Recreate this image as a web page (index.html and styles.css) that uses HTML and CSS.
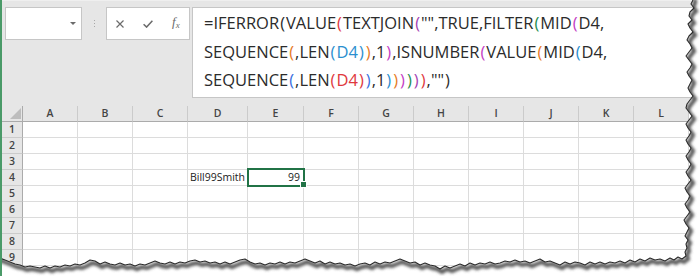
FILE: index.html
```html
<!DOCTYPE html>
<html>
<head>
<meta charset="utf-8">
<link rel="stylesheet" href="styles.css">
</head>
<body>
<div class="app">
  <div class="toolbar">
    <div class="namebox"><span class="dd"></span></div>
    <div class="sep"><i></i><i></i><i></i></div>
    <div class="btns">
      <svg class="ico-x" width="8" height="8" viewBox="0 0 8 8"><path d="M0.5 0.5L7.5 7.5M7.5 0.5L0.5 7.5" stroke="#6b6b6b" stroke-width="1.2" fill="none"/></svg>
      <svg class="ico-ok" width="10" height="8" viewBox="0 0 10 8"><path d="M0.6 4.2L3.6 7.1L9.4 0.8" stroke="#6b6b6b" stroke-width="1.5" fill="none"/></svg>
      <span class="fx"><i>f</i><sub>x</sub></span>
    </div>
    <div class="formula">
      <div class="fl">=IFERROR<span class="b p1">(</span>VALUE<span class="b p2">(</span>TEXTJOIN<span class="b p3">(</span>"",TRUE,FILTER<span class="b p4">(</span>MID<span class="b p5">(</span>D4,</div>
      <div class="fl">SEQUENCE<span class="b p6">(</span>,LEN<span class="b p7">(</span><span class="p7">D4</span><span class="b p7">)</span><span class="b p6">)</span>,1<span class="b p5">)</span>,ISNUMBER<span class="b p5">(</span>VALUE<span class="b p6">(</span>MID<span class="b p7">(</span>D4,</div>
      <div class="fl">SEQUENCE<span class="b p8">(</span>,LEN<span class="b p9">(</span><span class="p9">D4</span><span class="b p9">)</span><span class="b p8">)</span>,1<span class="b p7">)</span><span class="b p6">)</span><span class="b p5">)</span><span class="b p4">)</span><span class="b p3">)</span><span class="b p2">)</span>,""<span class="b p1">)</span></div>
    </div>
  </div>
  <div class="sheet">
    <div class="h corner"><svg width="11" height="11" viewBox="0 0 11 11"><path d="M11 0V11H0Z" fill="#bdbdbd"/></svg></div>
    <div class="h">A</div><div class="h">B</div><div class="h">C</div><div class="h">D</div><div class="h">E</div><div class="h">F</div><div class="h">G</div><div class="h">H</div><div class="h">I</div><div class="h">J</div><div class="h">K</div><div class="h">L</div>

    <div class="r">1</div><div class="c"></div><div class="c"></div><div class="c"></div><div class="c"></div><div class="c"></div><div class="c"></div><div class="c"></div><div class="c"></div><div class="c"></div><div class="c"></div><div class="c"></div><div class="c"></div>
    <div class="r">2</div><div class="c"></div><div class="c"></div><div class="c"></div><div class="c"></div><div class="c"></div><div class="c"></div><div class="c"></div><div class="c"></div><div class="c"></div><div class="c"></div><div class="c"></div><div class="c"></div>
    <div class="r">3</div><div class="c"></div><div class="c"></div><div class="c"></div><div class="c"></div><div class="c"></div><div class="c"></div><div class="c"></div><div class="c"></div><div class="c"></div><div class="c"></div><div class="c"></div><div class="c"></div>
    <div class="r">4</div><div class="c"></div><div class="c"></div><div class="c"></div><div class="c txt">Bill99Smith</div><div class="c num sel">99</div><div class="c"></div><div class="c"></div><div class="c"></div><div class="c"></div><div class="c"></div><div class="c"></div><div class="c"></div>
    <div class="r">5</div><div class="c"></div><div class="c"></div><div class="c"></div><div class="c"></div><div class="c"></div><div class="c"></div><div class="c"></div><div class="c"></div><div class="c"></div><div class="c"></div><div class="c"></div><div class="c"></div>
    <div class="r">6</div><div class="c"></div><div class="c"></div><div class="c"></div><div class="c"></div><div class="c"></div><div class="c"></div><div class="c"></div><div class="c"></div><div class="c"></div><div class="c"></div><div class="c"></div><div class="c"></div>
    <div class="r">7</div><div class="c"></div><div class="c"></div><div class="c"></div><div class="c"></div><div class="c"></div><div class="c"></div><div class="c"></div><div class="c"></div><div class="c"></div><div class="c"></div><div class="c"></div><div class="c"></div>
    <div class="r">8</div><div class="c"></div><div class="c"></div><div class="c"></div><div class="c"></div><div class="c"></div><div class="c"></div><div class="c"></div><div class="c"></div><div class="c"></div><div class="c"></div><div class="c"></div><div class="c"></div>
    <div class="r">9</div><div class="c"></div><div class="c"></div><div class="c"></div><div class="c"></div><div class="c"></div><div class="c"></div><div class="c"></div><div class="c"></div><div class="c"></div><div class="c"></div><div class="c"></div><div class="c"></div>
  </div>

  <svg class="tear" width="704" height="280" viewBox="0 0 704 280">
    <defs>
      <filter id="blur" x="-10%" y="-10%" width="120%" height="120%"><feGaussianBlur stdDeviation="1.6"/></filter>
      <clipPath id="outside">
        <path clip-rule="evenodd" d="M-10 -10H714V290H-10Z M0 0L693 0L691 4L694 8L690 12L689 16L692 20L688 24L690 28L693 32L689 36L687 40L690 44L692 48L689 52L686 56L689 60L692 64L690 68L687 72L689 76L692 80L690 84L688 88L690 92L693 96L690 100L687 104L686 108L689 112L692 116L689 120L686 124L688 128L691 132L689 136L686 140L688 144L691 148L689 152L686 156L688 160L691 164L689 168L686 172L688 176L691 180L688 184L685 188L687 192L690 196L688 200L685 204L687 208L690 212L687 216L684 220L686 224L689 228L687 232L685 236L688 240L686 244L687 248L685 252L686 256L682 259L678 257L674 260L670 258L665 261L660 259L655 260L650 258L645 261L640 259L635 262L630 260L625 263L620 261L615 263L610 262L605 264L600 262L595 264L590 262L585 265L580 263L575 262L570 264L565 262L560 265L555 263L550 261L545 262L540 259L535 261L530 263L525 261L520 262L515 260L510 262L505 261L500 263L495 264L490 262L485 264L480 263L475 265L470 263L465 266L460 264L455 266L450 268L445 266L440 269L435 266L430 265L425 263L420 265L415 262L410 263L405 261L400 259L395 261L390 263L385 262L380 264L375 262L370 265L365 263L360 264L355 266L350 264L345 265L340 263L335 264L330 262L325 264L320 261L315 263L310 261L305 259L300 261L295 263L290 262L285 264L280 262L275 264L270 263L265 265L260 263L255 264L250 262L245 259L240 260L235 262L230 264L225 262L220 264L215 262L210 263L205 261L200 262L195 260L190 261L185 263L180 262L175 264L170 262L165 264L160 263L155 261L150 263L145 265L140 264L135 266L130 264L125 265L120 263L115 265L110 264L105 262L100 264L95 261L90 260L85 263L80 265L75 264L70 266L65 265L60 267L55 266L50 268L45 266L40 268L35 267L30 266L25 267L20 265L15 264L10 262L5 260L0 258Z"/>
      </clipPath>
    </defs>
    <path fill="#ffffff" fill-rule="evenodd" d="M-10 -10H714V290H-10Z M0 0L693 0L691 4L694 8L690 12L689 16L692 20L688 24L690 28L693 32L689 36L687 40L690 44L692 48L689 52L686 56L689 60L692 64L690 68L687 72L689 76L692 80L690 84L688 88L690 92L693 96L690 100L687 104L686 108L689 112L692 116L689 120L686 124L688 128L691 132L689 136L686 140L688 144L691 148L689 152L686 156L688 160L691 164L689 168L686 172L688 176L691 180L688 184L685 188L687 192L690 196L688 200L685 204L687 208L690 212L687 216L684 220L686 224L689 228L687 232L685 236L688 240L686 244L687 248L685 252L686 256L682 259L678 257L674 260L670 258L665 261L660 259L655 260L650 258L645 261L640 259L635 262L630 260L625 263L620 261L615 263L610 262L605 264L600 262L595 264L590 262L585 265L580 263L575 262L570 264L565 262L560 265L555 263L550 261L545 262L540 259L535 261L530 263L525 261L520 262L515 260L510 262L505 261L500 263L495 264L490 262L485 264L480 263L475 265L470 263L465 266L460 264L455 266L450 268L445 266L440 269L435 266L430 265L425 263L420 265L415 262L410 263L405 261L400 259L395 261L390 263L385 262L380 264L375 262L370 265L365 263L360 264L355 266L350 264L345 265L340 263L335 264L330 262L325 264L320 261L315 263L310 261L305 259L300 261L295 263L290 262L285 264L280 262L275 264L270 263L265 265L260 263L255 264L250 262L245 259L240 260L235 262L230 264L225 262L220 264L215 262L210 263L205 261L200 262L195 260L190 261L185 263L180 262L175 264L170 262L165 264L160 263L155 261L150 263L145 265L140 264L135 266L130 264L125 265L120 263L115 265L110 264L105 262L100 264L95 261L90 260L85 263L80 265L75 264L70 266L65 265L60 267L55 266L50 268L45 266L40 268L35 267L30 266L25 267L20 265L15 264L10 262L5 260L0 258Z"/>
    <g clip-path="url(#outside)">
      <path class="shadow" transform="translate(2 3)" fill="none" stroke="#555" stroke-width="4" filter="url(#blur)" d="M693 -4L693 0L691 4L694 8L690 12L689 16L692 20L688 24L690 28L693 32L689 36L687 40L690 44L692 48L689 52L686 56L689 60L692 64L690 68L687 72L689 76L692 80L690 84L688 88L690 92L693 96L690 100L687 104L686 108L689 112L692 116L689 120L686 124L688 128L691 132L689 136L686 140L688 144L691 148L689 152L686 156L688 160L691 164L689 168L686 172L688 176L691 180L688 184L685 188L687 192L690 196L688 200L685 204L687 208L690 212L687 216L684 220L686 224L689 228L687 232L685 236L688 240L686 244L687 248L685 252L686 256L682 259L678 257L674 260L670 258L665 261L660 259L655 260L650 258L645 261L640 259L635 262L630 260L625 263L620 261L615 263L610 262L605 264L600 262L595 264L590 262L585 265L580 263L575 262L570 264L565 262L560 265L555 263L550 261L545 262L540 259L535 261L530 263L525 261L520 262L515 260L510 262L505 261L500 263L495 264L490 262L485 264L480 263L475 265L470 263L465 266L460 264L455 266L450 268L445 266L440 269L435 266L430 265L425 263L420 265L415 262L410 263L405 261L400 259L395 261L390 263L385 262L380 264L375 262L370 265L365 263L360 264L355 266L350 264L345 265L340 263L335 264L330 262L325 264L320 261L315 263L310 261L305 259L300 261L295 263L290 262L285 264L280 262L275 264L270 263L265 265L260 263L255 264L250 262L245 259L240 260L235 262L230 264L225 262L220 264L215 262L210 263L205 261L200 262L195 260L190 261L185 263L180 262L175 264L170 262L165 264L160 263L155 261L150 263L145 265L140 264L135 266L130 264L125 265L120 263L115 265L110 264L105 262L100 264L95 261L90 260L85 263L80 265L75 264L70 266L65 265L60 267L55 266L50 268L45 266L40 268L35 267L30 266L25 267L20 265L15 264L10 262L5 260L0 258L-4 258"/>
    </g>
    <path fill="none" stroke="#2a2a2a" stroke-width="1.1" stroke-linejoin="round" d="M693 0L691 4L694 8L690 12L689 16L692 20L688 24L690 28L693 32L689 36L687 40L690 44L692 48L689 52L686 56L689 60L692 64L690 68L687 72L689 76L692 80L690 84L688 88L690 92L693 96L690 100L687 104L686 108L689 112L692 116L689 120L686 124L688 128L691 132L689 136L686 140L688 144L691 148L689 152L686 156L688 160L691 164L689 168L686 172L688 176L691 180L688 184L685 188L687 192L690 196L688 200L685 204L687 208L690 212L687 216L684 220L686 224L689 228L687 232L685 236L688 240L686 244L687 248L685 252L686 256L682 259L678 257L674 260L670 258L665 261L660 259L655 260L650 258L645 261L640 259L635 262L630 260L625 263L620 261L615 263L610 262L605 264L600 262L595 264L590 262L585 265L580 263L575 262L570 264L565 262L560 265L555 263L550 261L545 262L540 259L535 261L530 263L525 261L520 262L515 260L510 262L505 261L500 263L495 264L490 262L485 264L480 263L475 265L470 263L465 266L460 264L455 266L450 268L445 266L440 269L435 266L430 265L425 263L420 265L415 262L410 263L405 261L400 259L395 261L390 263L385 262L380 264L375 262L370 265L365 263L360 264L355 266L350 264L345 265L340 263L335 264L330 262L325 264L320 261L315 263L310 261L305 259L300 261L295 263L290 262L285 264L280 262L275 264L270 263L265 265L260 263L255 264L250 262L245 259L240 260L235 262L230 264L225 262L220 264L215 262L210 263L205 261L200 262L195 260L190 261L185 263L180 262L175 264L170 262L165 264L160 263L155 261L150 263L145 265L140 264L135 266L130 264L125 265L120 263L115 265L110 264L105 262L100 264L95 261L90 260L85 263L80 265L75 264L70 266L65 265L60 267L55 266L50 268L45 266L40 268L35 267L30 266L25 267L20 265L15 264L10 262L5 260L0 258"/>
  </svg>
</div>
</body>
</html>
```

FILE: styles.css
```css
html, body {
  margin: 0;
  padding: 0;
}
body {
  width: 700px;
  height: 276px;
  overflow: hidden;
  background: #ffffff;
}
.app {
  position: relative;
  width: 700px;
  height: 276px;
  box-sizing: border-box;
  border-left: 2px solid #4a9a68;
  background: #ffffff;
  overflow: hidden;
  font-family: "Open Sans", "Noto Sans", sans-serif;
}
.toolbar {
  display: flex;
  align-items: flex-start;
  height: 106px;
  box-sizing: border-box;
  padding: 6px 0 0 3px;
  border-top: 1px solid #efefef;
  background: #e6e6e6;
}
.namebox {
  flex: none;
  width: 77px;
  height: 33px;
  box-sizing: border-box;
  background: #fff;
  border: 1px solid #c6c6c6;
  display: flex;
  align-items: center;
  justify-content: flex-end;
  padding-right: 5px;
}
.dd {
  width: 0;
  height: 0;
  border-left: 3px solid transparent;
  border-right: 3px solid transparent;
  border-top: 3px solid #6b6b6b;
}
.sep {
  flex: none;
  width: 24px;
  display: flex;
  flex-direction: column;
  align-items: center;
  gap: 2px;
  padding-top: 13px;
}
.sep i {
  display: block;
  width: 1px;
  height: 1px;
  background: #a8a8a8;
}
.btns {
  flex: none;
  width: 84px;
  height: 33px;
  box-sizing: border-box;
  background: #fff;
  border: 1px solid #c6c6c6;
  display: flex;
  align-items: center;
  padding-left: 9px;
  gap: 19px;
}
.btns svg { display: block; }
.fx {
  font-family: "Liberation Serif", "DejaVu Serif", serif;
  color: #6b6b6b;
  font-size: 13px;
  line-height: 13px;
  white-space: nowrap;
}
.fx sub {
  font-size: 9px;
  vertical-align: -2px;
  font-style: italic;
}
.formula {
  flex: 1;
  margin-left: 2px;
  height: 91px;
  box-sizing: border-box;
  background: #fff;
  border: 1px solid #c6c6c6;
  padding: 1px 0 0 11px;
  font-size: 16.5px;
  line-height: 28.5px;
  color: #2b2b2b;
  white-space: nowrap;
  overflow: hidden;
}
.b { padding: 0 1px; }
.p1 { color: #2b2b2b; }
.p2 { color: #e0383e; }
.p3 { color: #a43fb3; }
.p4 { color: #1e8c4e; }
.p5 { color: #c43cc4; }
.p6 { color: #e67a1f; }
.p7 { color: #2b8fcf; }
.p8 { color: #3a6fe0; }
.p9 { color: #e0383e; }

.sheet {
  display: grid;
  grid-template-columns: 21px 55px 55px 55px 60px 56px repeat(7, 55px);
  grid-auto-rows: 16px;
  background: #fff;
}
.h, .r, .c {
  box-sizing: border-box;
  font-size: 10.5px;
  line-height: 15px;
}
.h {
  background: #e6e6e6;
  border-right: 1px solid #cbcbcb;
  border-bottom: 1px solid #ababab;
  text-align: center;
  color: #444;
  font-weight: 600;
}
.corner {
  border-right: 1px solid #ababab;
  display: flex;
  align-items: flex-end;
  justify-content: flex-end;
  padding: 0 1px 2px 0;
}
.corner svg { display: block; }
.r {
  background: #e6e6e6;
  border-right: 1px solid #ababab;
  border-bottom: 1px solid #cbcbcb;
  text-align: center;
  color: #444;
  font-weight: 600;
}
.c {
  border-right: 1px solid #dcdcdc;
  border-bottom: 1px solid #dcdcdc;
  color: #222;
  white-space: nowrap;
}
.txt { padding-left: 2px; }
.num { text-align: right; padding-right: 3px; }
.sel { position: relative; }
.sel::after {
  content: "";
  position: absolute;
  left: -1px;
  top: -2px;
  width: 58px;
  height: 19px;
  box-sizing: border-box;
  border: 2px solid #217346;
}
.sel::before {
  content: "";
  position: absolute;
  right: -4px;
  bottom: -3px;
  width: 5px;
  height: 5px;
  background: #217346;
  border: 1px solid #fff;
  z-index: 1;
}
.tear {
  position: absolute;
  left: -2px;
  top: 0;
}
```
